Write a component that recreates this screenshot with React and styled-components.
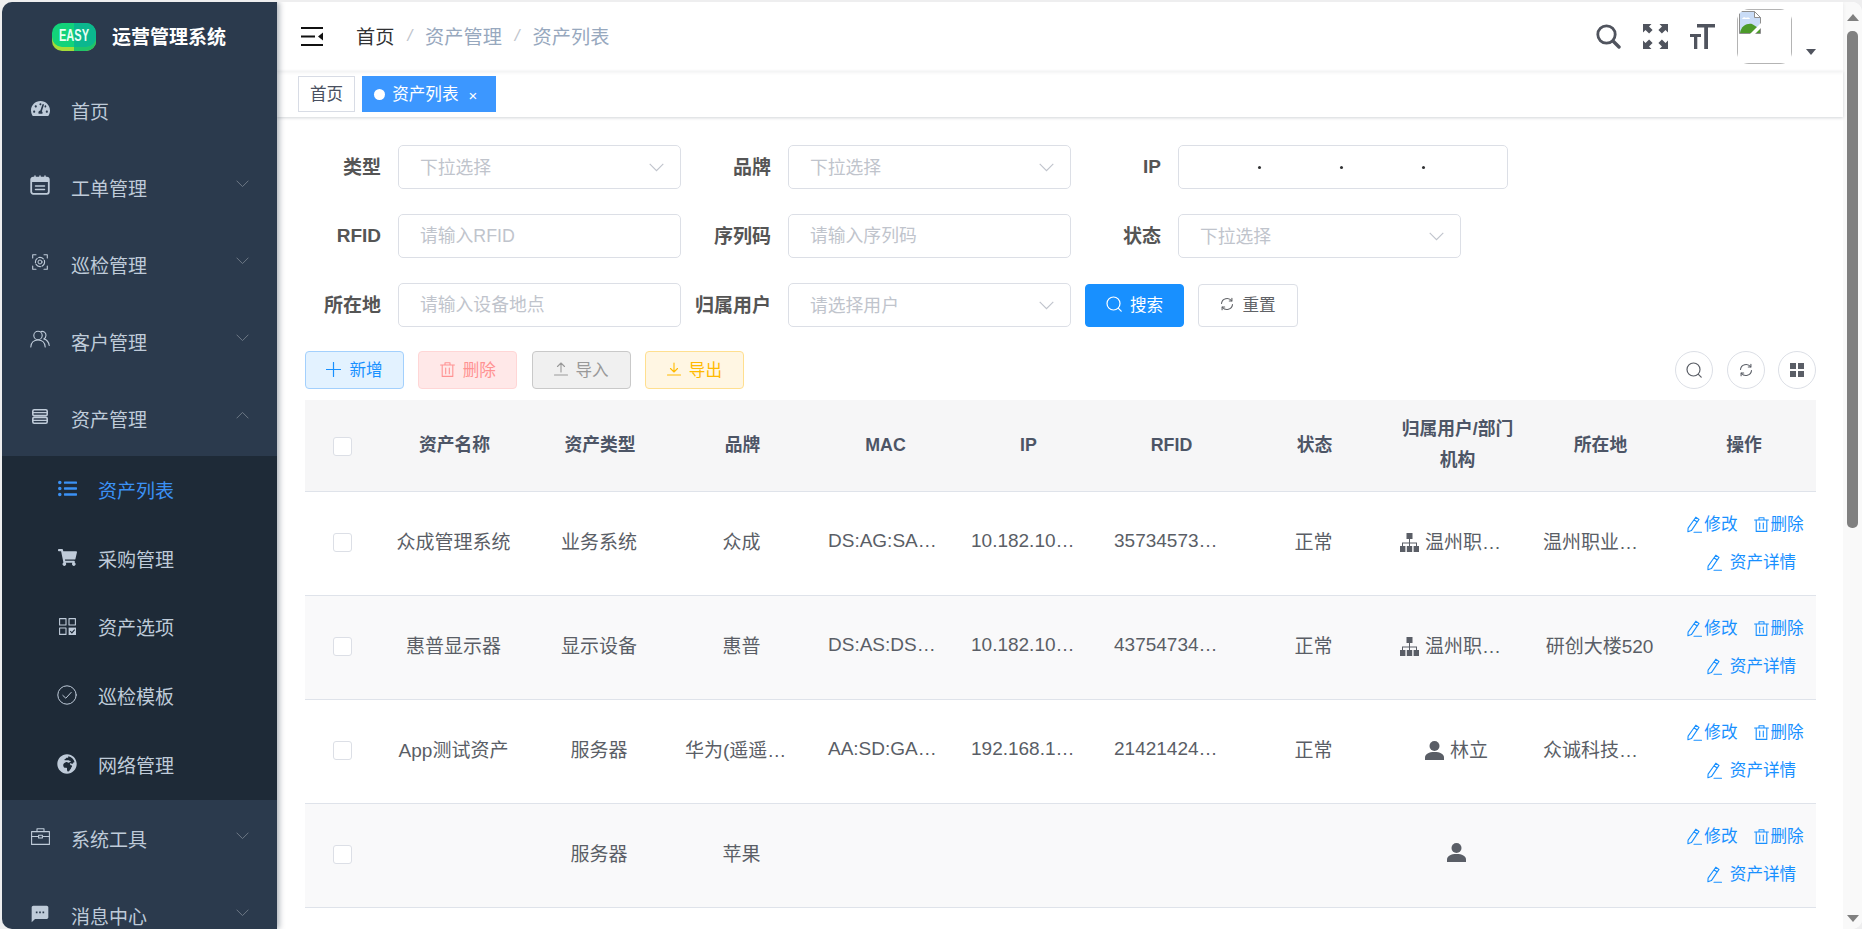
import styled, { createGlobalStyle } from "styled-components";
import { FaTachometerAlt, FaListUl, FaShoppingCart, FaGlobeAfrica } from "react-icons/fa";
import { MdSms } from "react-icons/md";

const GlobalStyle = createGlobalStyle`
    html, body {
        margin: 0;
        height: 100%;
        overflow: hidden;
        background: #eeeeef;
    }
    * {
        box-sizing: border-box;
    }
    body, input, button, table {
        font-family: "Liberation Sans", "Noto Sans CJK SC", sans-serif;
    }
`;

const line = { fill: "none", stroke: "currentColor", strokeLinecap: "round", strokeLinejoin: "round" };

const CalendarIcon = () => (
    <svg width="20" height="20" viewBox="0 0 20 20">
        <rect x="1.2" y="2.6" width="17.6" height="16.2" rx="2" {...line} strokeWidth="1.8" />
        <path d="M1.2 7h17.6V4.5a2 2 0 0 0-2-2H3.2a2 2 0 0 0-2 2z" fill="currentColor" />
        <path d="M5 1v2M10 1v2M15 1v2M5.5 11h9M5.5 14.5h9" {...line} strokeWidth="1.5" />
    </svg>
);

const ScanIcon = () => (
    <svg width="16" height="16" viewBox="0 0 16 16">
        <path d="M.7 4V.7H4M12 .7h3.3V4M15.3 12v3.3H12M4 15.3H.7V12" {...line} strokeWidth="1.1" />
        <circle cx="8" cy="8" r="2" {...line} strokeWidth="1" />
        <circle cx="8" cy="8" r="4.6" {...line} strokeWidth="1.1" strokeDasharray="5 1.6" />
    </svg>
);

const UsersIcon = () => (
    <svg width="20" height="18" viewBox="0 0 20 18">
        <circle cx="8" cy="5.5" r="4.2" {...line} strokeWidth="1.1" />
        <path d="M.8 17c.3-4.4 3-7 7.2-7s6.9 2.6 7.2 7M11 1.6c2.6-.8 5 1 5 3.6 0 1.6-.8 3-2.2 3.7 2.8.8 5 3.4 5.4 6.6" {...line} strokeWidth="1.1" />
    </svg>
);

const ServerIcon = () => (
    <svg width="16" height="15" viewBox="0 0 16 15">
        <rect x=".8" y=".8" width="14.4" height="5.8" rx="1.4" {...line} strokeWidth="1.6" />
        <rect x=".8" y="8.4" width="14.4" height="5.8" rx="1.4" {...line} strokeWidth="1.6" />
        <path d="M3.4 3.7h2.6M3.4 11.3h2.6M.8 3.7h14.4M.8 11.3h14.4" {...line} strokeWidth="1.2" />
    </svg>
);

const OptionsIcon = () => (
    <svg width="17" height="17" viewBox="0 0 17 17">
        <rect x=".6" y=".6" width="6.4" height="6.4" {...line} strokeWidth="1.1" />
        <rect x="10" y=".6" width="6.4" height="6.4" {...line} strokeWidth="1.1" />
        <rect x=".6" y="10" width="6.4" height="6.4" {...line} strokeWidth="1.1" />
        <rect x="9.6" y="9.6" width="7.4" height="7.4" fill="currentColor" />
        <path d="m11.2 13.2 1.7 1.7 2.8-3.2" fill="none" stroke="#1e2a37" strokeWidth="1.1" />
    </svg>
);

const CircleCheckIcon = () => (
    <svg width="20" height="20" viewBox="0 0 20 20">
        <circle cx="10" cy="10" r="9.2" {...line} strokeWidth="1" />
        <path d="m5.8 10.4 3 2.8 5.4-5.8" {...line} strokeWidth="1" />
    </svg>
);

const CaseIcon = () => (
    <svg width="19" height="17" viewBox="0 0 19 17">
        <rect x=".6" y="3.6" width="17.8" height="12.8" {...line} strokeWidth="1.1" />
        <path d="M6 3.6V.8h7v2.8M.6 8.5h6.6M11.8 8.5h6.6" {...line} strokeWidth="1.1" />
        <rect x="7.6" y="7.2" width="3.8" height="2.8" {...line} strokeWidth="1.1" />
    </svg>
);

const EasyLogo = () => (
    <svg width="44" height="28" viewBox="0 0 44 28">
        <rect y="3" width="44" height="25" rx="10" fill="#a5dc38" />
        <path d="M22 3h12a10 10 0 0 1 10 10v5a10 10 0 0 1-10 10H22z" fill="#1fc46a" />
        <rect width="44" height="24" rx="10" fill="#12d37a" />
        <path d="M22 0h12a10 10 0 0 1 10 10v4a10 10 0 0 1-10 10H22z" fill="#0bb78e" />
        <text x="7" y="18" fontSize="16" fontWeight="700" textLength="30" lengthAdjust="spacingAndGlyphs" fill="#e8fff4" fontFamily="Liberation Sans">EASY</text>
    </svg>
);

const HamburgerIcon = () => (
    <svg width="22" height="19" viewBox="0 0 22 19">
        <path d="M0 1h22M0 9.500h14M0 18h22" stroke="#111" strokeWidth="2" fill="none" />
        <path d="M22 5.500v8l-5-4z" fill="#111" />
    </svg>
);

const SearchBigIcon = () => (
    <svg width="25" height="25" viewBox="0 0 25 25">
        <circle cx="10.500" cy="10.500" r="8.700" {...line} strokeWidth="2.800" />
        <path d="m17 17 6 6" {...line} strokeWidth="3.400" />
    </svg>
);

const FullscreenIcon = () => (
    <svg width="25" height="25" viewBox="0 0 25 25" fill="currentColor">
        <path d="M0 0h8.500L6 2.500l3.600 3.600-3.500 3.500L2.500 6 0 8.500z" />
        <path d="M25 0h-8.500L19 2.500l-3.600 3.600 3.500 3.500L22.500 6 25 8.500z" />
        <path d="M0 25h8.500L6 22.500l3.600-3.600-3.500-3.500-3.600 3.600L0 16.500z" />
        <path d="M25 25h-8.500l2.500-2.500-3.600-3.600 3.500-3.500 3.600 3.600 2.500-2.500z" />
    </svg>
);

const FontSizeIcon = () => (
    <svg width="25" height="25" viewBox="0 0 25 25" fill="currentColor">
        <path d="M7 0h18v3.400h-7V25h-3.800V3.400H7z" />
        <path d="M0 10h11v3H7.300v12H4V13H0z" />
    </svg>
);

const BrokenImage = () => (
    <svg width="22" height="23" viewBox="0 0 22 23">
        <path d="M.5 .5h15l6 6v16H.5z" fill="#c9dcf7" stroke="#8f8f8f" />
        <path d="M15.500 .5v6h6z" fill="#fff" stroke="#8f8f8f" />
        <path d="M3 8c1-2 3-2 4-1 2-1 4 0 4 1z" fill="#fff" />
        <path d="M1 22c1-7 7-10 12-9l8 5v4z" fill="#4c9a2a" />
        <path d="M11 23l11-11v5l-6 6z" fill="#fff" />
    </svg>
);

const ChevronIcon = ({ up, size = 13 }) => (
    <svg width={size} height={(size * 8) / 13} viewBox="0 0 13 8">
        <path d={up ? "M.6 7.300 6.500 1.400l5.900 5.900" : "M.6.700l5.900 5.900L12.400.700"} fill="none" stroke="currentColor" strokeWidth="1" />
    </svg>
);

const PlusIcon = () => (
    <svg width="15" height="15" viewBox="0 0 15 15">
        <path d="M7.500.5v14M.5 7.500h14" {...line} strokeWidth="1.200" />
    </svg>
);

const TrashIcon = () => (
    <svg width="15" height="15" viewBox="0 0 15 15">
        <path d="M.6 3h13.800M5 3V.8h5V3M2.200 3v11.400h10.600V3M5.700 6v5.800M9.300 6v5.800" {...line} strokeWidth="1.100" />
    </svg>
);

const UploadIcon = () => (
    <svg width="14" height="14" viewBox="0 0 14 14">
        <path d="M.5 13h13M7 10V1M3.500 4.500 7 1l3.500 3.500" {...line} strokeWidth="1.100" />
    </svg>
);

const DownloadIcon = () => (
    <svg width="14" height="14" viewBox="0 0 14 14">
        <path d="M.5 13h13M7 1v9M3.500 6.500 7 10l3.500-3.500" {...line} strokeWidth="1.100" />
    </svg>
);

const SearchIcon = () => (
    <svg width="16" height="16" viewBox="0 0 16 16">
        <circle cx="7.500" cy="7.500" r="6.500" {...line} strokeWidth="1.200" />
        <path d="m12.400 12.400 2.800 2.800" {...line} strokeWidth="1.200" />
    </svg>
);

const RefreshIcon = () => (
    <svg width="14" height="14" viewBox="0 0 14 14">
        <path d="M1.500 6.500A5.600 5.600 0 0 1 11.600 3.800M12.500 7.500A5.600 5.600 0 0 1 2.400 10.200" {...line} strokeWidth="1.100" />
        <path d="M11.900 1.300v2.700H9.300M2.100 12.700v-2.700h2.600" {...line} strokeWidth="1.100" />
    </svg>
);

const GridIcon = () => (
    <svg width="14" height="14" viewBox="0 0 14 14" fill="currentColor">
        <rect width="6" height="6" />
        <rect x="8" width="6" height="6" />
        <rect y="8" width="6" height="6" />
        <rect x="8" y="8" width="6" height="6" />
    </svg>
);

const PencilIcon = () => (
    <svg width="15" height="17" viewBox="0 0 15 17">
        <path d="M8.800 1.200l3.200 2.200-7.600 11.200-3.500 1.200.2-3.700zM7 3.800l3.200 2.200M7 16.300h7.500" {...line} strokeWidth="1.100" />
    </svg>
);

const UserIcon = () => (
    <svg width="19" height="19" viewBox="0 0 19 19" fill="currentColor">
        <circle cx="9.500" cy="5" r="5" />
        <path d="M0 19v-2.500c0-3.500 4-5.500 9.500-5.500s9.500 2 9.500 5.500V19z" />
    </svg>
);

const OrgIcon = () => (
    <svg width="19" height="19" viewBox="0 0 19 19" fill="currentColor">
        <rect x="6.500" y="0" width="6" height="6" />
        <rect x="0" y="13" width="5.400" height="6" />
        <rect x="6.800" y="13" width="5.400" height="6" />
        <rect x="13.600" y="13" width="5.400" height="6" />
        <path d="M9 6h1v3.500h7v3.500h-1v-2.500h-6V13H9v-2.500H3V13H2V9.500h7z" />
    </svg>
);

const menuTop = [
    { icon: <FaTachometerAlt size={19} />, label: "首页" },
    { icon: <CalendarIcon />, label: "工单管理", arrow: true },
    { icon: <ScanIcon />, label: "巡检管理", arrow: true },
    { icon: <UsersIcon />, label: "客户管理", arrow: true },
    { icon: <ServerIcon />, label: "资产管理", arrow: true, open: true },
];

const menuSub = [
    { icon: <FaListUl size={19} />, label: "资产列表", active: true },
    { icon: <FaShoppingCart size={19} />, label: "采购管理" },
    { icon: <OptionsIcon />, label: "资产选项" },
    { icon: <CircleCheckIcon />, label: "巡检模板" },
    { icon: <FaGlobeAfrica size={20} />, label: "网络管理" },
];

const menuBottom = [
    { icon: <CaseIcon />, label: "系统工具", arrow: true },
    { icon: <MdSms size={22} />, label: "消息中心", arrow: true },
];

const columnWidths = [75, 149, 142, 143, 143, 143, 143, 143, 143, 143, 144];

const columns = ["资产名称", "资产类型", "品牌", "MAC", "IP", "RFID", "状态", "归属用户/部门机构", "所在地", "操作"];

const assets = [
    { name: "众成管理系统", type: "业务系统", brand: "众成", mac: "DS:AG:SA:DG:SA:DG", ip: "10.182.103.12", rfid: "357345734573", status: "正常", dept: "温州职业技术学院", place: "温州职业技术学院" },
    { name: "惠普显示器", type: "显示设备", brand: "惠普", mac: "DS:AS:DSAD:SA:DS", ip: "10.182.104.12", rfid: "437547345734", status: "正常", dept: "温州职业技术学院", place: "研创大楼520" },
    { name: "App测试资产", type: "服务器", brand: "华为(遥遥领先)", mac: "AA:SD:GA:SD:GA:SD", ip: "192.168.100.1", rfid: "214214241421", status: "正常", user: "林立", place: "众诚科技有限公司" },
    { type: "服务器", brand: "苹果", user: "" },
];

export default function App() {
    return (
        <Window>
            <GlobalStyle />
            <SideBar>
                <LogoRow>
                    <EasyLogo />
                    <LogoTitle>运营管理系统</LogoTitle>
                </LogoRow>
                {menuTop.map((item) => (
                    <MenuItem key={item.label}>
                        <MenuIcon>{item.icon}</MenuIcon>
                        <span>{item.label}</span>
                        {item.arrow && <MenuArrow><ChevronIcon up={item.open} /></MenuArrow>}
                    </MenuItem>
                ))}
                <SubMenu>
                    {menuSub.map((item) => (
                        <SubItem key={item.label} active={item.active}>
                            <MenuIcon>{item.icon}</MenuIcon>
                            <span>{item.label}</span>
                        </SubItem>
                    ))}
                </SubMenu>
                {menuBottom.map((item) => (
                    <MenuItem key={item.label}>
                        <MenuIcon>{item.icon}</MenuIcon>
                        <span>{item.label}</span>
                        <MenuArrow><ChevronIcon /></MenuArrow>
                    </MenuItem>
                ))}
            </SideBar>

            <Main>
                <Header>
                    <HamburgerIcon />
                    <Breadcrumb>
                        <CrumbHome>首页</CrumbHome>
                        <CrumbSep>/</CrumbSep>
                        <Crumb>资产管理</Crumb>
                        <CrumbSep>/</CrumbSep>
                        <Crumb>资产列表</Crumb>
                    </Breadcrumb>
                    <HeaderTools>
                        <SearchBigIcon />
                        <FullscreenIcon />
                        <FontSizeIcon />
                        <Avatar>
                            <AvatarFrame><BrokenImage /></AvatarFrame>
                        </Avatar>
                        <AvatarCaret />
                    </HeaderTools>
                </Header>

                <TagsBar>
                    <Tag>首页</Tag>
                    <Tag active>
                        <TagDot />
                        资产列表
                        <TagClose>×</TagClose>
                    </Tag>
                </TagsBar>

                <Content>
                    <FormRow>
                        <FormLabel width={76}>类型</FormLabel>
                        <SelectBox>下拉选择<SelectArrow><ChevronIcon size={15} /></SelectArrow></SelectBox>
                        <FormLabel width={90}>品牌</FormLabel>
                        <SelectBox>下拉选择<SelectArrow><ChevronIcon size={15} /></SelectArrow></SelectBox>
                        <FormLabel width={90} latin>IP</FormLabel>
                        <IpBox>
                            <IpPart><IpDot /></IpPart>
                            <IpPart><IpDot /></IpPart>
                            <IpPart><IpDot /></IpPart>
                            <IpPart />
                        </IpBox>
                    </FormRow>
                    <FormRow>
                        <FormLabel width={76} latin>RFID</FormLabel>
                        <TextInput placeholder="请输入RFID" />
                        <FormLabel width={90}>序列码</FormLabel>
                        <TextInput placeholder="请输入序列码" />
                        <FormLabel width={90}>状态</FormLabel>
                        <SelectBox>下拉选择<SelectArrow><ChevronIcon size={15} /></SelectArrow></SelectBox>
                    </FormRow>
                    <FormRow>
                        <FormLabel width={76}>所在地</FormLabel>
                        <TextInput placeholder="请输入设备地点" />
                        <FormLabel width={90}>归属用户</FormLabel>
                        <SelectBox>请选择用户<SelectArrow><ChevronIcon size={15} /></SelectArrow></SelectBox>
                        <SearchButton><SearchIcon />搜索</SearchButton>
                        <ResetButton><RefreshIcon />重置</ResetButton>
                    </FormRow>

                    <Toolbar>
                        <ActionButton kind="add"><PlusIcon />新增</ActionButton>
                        <ActionButton kind="del"><TrashIcon />删除</ActionButton>
                        <ActionButton kind="imp"><UploadIcon />导入</ActionButton>
                        <ActionButton kind="exp"><DownloadIcon />导出</ActionButton>
                        <RoundTools>
                            <RoundButton><SearchIcon /></RoundButton>
                            <RoundButton><RefreshIcon /></RoundButton>
                            <RoundButton><GridIcon /></RoundButton>
                        </RoundTools>
                    </Toolbar>

                    <Table>
                        <colgroup>
                            {columnWidths.map((w, i) => <col key={i} width={w} />)}
                        </colgroup>
                        <thead>
                            <tr>
                                <HeadCell><CheckBox /></HeadCell>
                                {columns.map((c) => (
                                    <HeadCell key={c}><CellText>{c}</CellText></HeadCell>
                                ))}
                            </tr>
                        </thead>
                        <tbody>
                            {assets.map((row, i) => (
                                <BodyRow key={i} striped={i % 2 === 1}>
                                    <CheckCell><CheckBox /></CheckCell>
                                    <BodyCell><CellText>{row.name}</CellText></BodyCell>
                                    <BodyCell><CellText>{row.type}</CellText></BodyCell>
                                    <BodyCell><CellText>{row.brand}</CellText></BodyCell>
                                    <BodyCell><CellText>{row.mac}</CellText></BodyCell>
                                    <BodyCell><CellText>{row.ip}</CellText></BodyCell>
                                    <BodyCell><CellText>{row.rfid}</CellText></BodyCell>
                                    <BodyCell><CellText>{row.status}</CellText></BodyCell>
                                    <BodyCell>
                                        <CellText>
                                            {row.dept && <><OrgIcon /><OwnerName>{row.dept}</OwnerName></>}
                                            {row.user !== undefined && <UserIcon />}
                                            {row.user && <OwnerName>{row.user}</OwnerName>}
                                        </CellText>
                                    </BodyCell>
                                    <BodyCell><CellText>{row.place}</CellText></BodyCell>
                                    <ActionCell>
                                        <RowActions>
                                            <RowAction><PencilIcon />修改</RowAction>
                                            <RowAction><TrashIcon />删除</RowAction>
                                            <RowDetail><PencilIcon />资产详情</RowDetail>
                                        </RowActions>
                                    </ActionCell>
                                </BodyRow>
                            ))}
                        </tbody>
                    </Table>
                </Content>
            </Main>

            <ScrollRail>
                <RailArrowUp />
                <RailThumb />
                <RailArrowDown />
            </ScrollRail>
        </Window>
    );
}

const Window = styled.div`
    display: flex;
    height: calc(100vh - 2px);
    margin: 2px 0 0 2px;
    background: #fff;
    border-radius: 10px;
    overflow: hidden;
`;

const SideBar = styled.aside`
    flex: 0 0 275px;
    background: #2b3a4d;
    color: #bfcbd9;
    font-size: 19px;
    box-shadow: 2px 0 6px rgba(0, 21, 41, 0.35);
    position: relative;
    z-index: 2;
`;

const LogoRow = styled.div`
    height: 69px;
    display: flex;
    align-items: center;
    padding: 0 0 0 50px;
    gap: 16px;
`;

const LogoTitle = styled.span`
    color: #fff;
    font-weight: 700;
    font-size: 19px;
    margin-top: -2px;
`;

const MenuItem = styled.div`
    position: relative;
    height: 77px;
    display: flex;
    align-items: center;
    padding: 1px 0 0 28px;
    gap: 21px;
`;

const MenuIcon = styled.span`
    width: 20px;
    height: 22px;
    margin-top: -4px;
    display: flex;
    align-items: center;
    justify-content: center;
    flex: none;
`;

const MenuArrow = styled.span`
    position: absolute;
    right: 28px;
    top: 32px;
    color: #6d7885;
    line-height: 0;
`;

const SubMenu = styled.div`
    background: #1e2a37;
`;

const SubItem = styled.div`
    height: 68.8px;
    display: flex;
    align-items: center;
    padding: 0 0 2px 55px;
    gap: 21px;
    color: ${(props) => (props.active ? "#3b91f5" : "#bfcbd9")};
    ${MenuIcon} {
        margin-top: -1px;
    }
`;

const Main = styled.main`
    flex: 1;
    min-width: 0;
    display: flex;
    flex-direction: column;
    background: #fff;
`;

const Header = styled.header`
    height: 69px;
    flex: none;
    display: flex;
    align-items: center;
    padding-left: 24px;
    box-shadow: 0 1px 4px rgba(0, 21, 41, 0.08);
    position: relative;
    z-index: 1;
`;

const Breadcrumb = styled.nav`
    display: flex;
    align-items: center;
    margin: -2px 0 0 33px;
    font-size: 19.2px;
`;

const CrumbHome = styled.span`
    color: #303133;
`;

const Crumb = styled.span`
    color: #97a8be;
`;

const CrumbSep = styled.span`
    color: #c0c4cc;
    font-size: 17px;
    font-style: italic;
    margin: 0 13px 0 13px;
`;

const HeaderTools = styled.div`
    margin-left: auto;
    display: flex;
    align-items: center;
    gap: 22px;
    color: #50545e;
    padding-right: 27px;
`;

const Avatar = styled.div`
    width: 55px;
    height: 55px;
    border-radius: 12px;
    overflow: hidden;
`;

const AvatarFrame = styled.div`
    width: 100%;
    height: 100%;
    border: 1px solid #b4b4b4;
    padding: 1px;
    line-height: 0;
`;

const AvatarCaret = styled.span`
    width: 0;
    height: 0;
    margin: 30px 0 0 -8px;
    border-left: 5px solid transparent;
    border-right: 5px solid transparent;
    border-top: 6px solid #50545e;
`;

const TagsBar = styled.div`
    height: 46px;
    flex: none;
    display: flex;
    gap: 7px;
    padding: 5px 0 0 21px;
    box-shadow: 0 1px 3px rgba(0, 21, 41, 0.18);
    position: relative;
`;

const Tag = styled.span`
    height: 36px;
    display: inline-flex;
    align-items: center;
    padding: ${(props) => (props.active ? "0 18px 2px 11px" : "0 11px 2px")};
    font-size: 16.6px;
    color: ${(props) => (props.active ? "#fff" : "#495060")};
    background: ${(props) => (props.active ? "#3c97ff" : "#fff")};
    border: 1px solid ${(props) => (props.active ? "#3c97ff" : "#d8dce5")};
`;

const TagDot = styled.span`
    width: 11px;
    height: 11px;
    border-radius: 50%;
    background: #fff;
    margin: 2px 7px 0 0;
`;

const TagClose = styled.span`
    font-size: 15px;
    margin: 4px 0 0 10px;
`;

const Content = styled.div`
    flex: 1;
    min-height: 0;
    padding: 28px 27px 0 28px;
    overflow: hidden;
`;

const FormRow = styled.div`
    display: flex;
    align-items: center;
    height: 44px;
    margin-bottom: 25px;
`;

const FormLabel = styled.label`
    width: ${(props) => props.width}px;
    flex: none;
    margin-right: 17px;
    padding-bottom: ${(props) => (props.latin ? "0" : "4px")};
    text-align: right;
    font-size: 19px;
    font-weight: 700;
    color: #555;
    white-space: nowrap;
`;

const SelectBox = styled.div`
    position: relative;
    width: 283px;
    height: 44px;
    flex: none;
    display: flex;
    align-items: center;
    padding: 0 0 2px 21px;
    font-size: 17.8px;
    color: #c0c4cc;
    background: #fff;
    border: 1px solid #dcdfe6;
    border-radius: 5px;
`;

const SelectArrow = styled.span`
    position: absolute;
    right: 16px;
    top: 17px;
    line-height: 0;
    color: #c0c4cc;
`;

const TextInput = styled.input`
    width: 283px;
    height: 44px;
    flex: none;
    padding: 0 21px;
    font-size: 17.8px;
    color: #606266;
    outline: none;
    background: #fff;
    border: 1px solid #dcdfe6;
    border-radius: 5px;
    &::placeholder {
        color: #c0c4cc;
        opacity: 1;
    }
`;

const IpBox = styled.div`
    width: 330px;
    height: 44px;
    flex: none;
    display: flex;
    border: 1px solid #dcdfe6;
    border-radius: 5px;
`;

const IpPart = styled.span`
    flex: 1;
    display: flex;
    align-items: center;
    justify-content: flex-end;
`;

const IpDot = styled.span`
    width: 3px;
    height: 3px;
    border-radius: 50%;
    background: #303133;
`;

const SearchButton = styled.button`
    width: 99px;
    height: 43px;
    margin-left: 14px;
    display: flex;
    align-items: center;
    justify-content: center;
    gap: 8px;
    padding: 0 0 2px;
    color: #fff;
    font-size: 16.6px;
    background: #1890ff;
    border: 1px solid #1890ff;
    border-radius: 4px;
`;

const ResetButton = styled(SearchButton)`
    width: 100px;
    color: #606266;
    background: #fff;
    border-color: #dcdfe6;
`;

const Toolbar = styled.div`
    display: flex;
    align-items: center;
    gap: 14.3px;
    height: 38px;
    margin: -1px 0 11px;
`;

const kinds = {
    add: { bg: "#e3f2ff", border: "#a3d0fd", color: "#1890ff" },
    del: { bg: "#ffe8e8", border: "#ffd6d6", color: "#ff9292" },
    imp: { bg: "#f0f0f0", border: "#c9c9c9", color: "#999" },
    exp: { bg: "#fff6e3", border: "#ffdf8f", color: "#ffba00" },
};

const ActionButton = styled.button`
    width: 99px;
    height: 38px;
    display: flex;
    align-items: center;
    justify-content: center;
    gap: 8px;
    padding: 0 0 2px;
    font-size: 16.6px;
    color: ${(props) => kinds[props.kind].color};
    background: ${(props) => kinds[props.kind].bg};
    border: 1px solid ${(props) => kinds[props.kind].border};
    border-radius: 4px;
`;

const RoundTools = styled.div`
    margin-left: auto;
    display: flex;
    gap: 13.500px;
`;

const RoundButton = styled.button`
    width: 38px;
    height: 38px;
    padding: 0;
    display: flex;
    align-items: center;
    justify-content: center;
    color: #5a5e66;
    background: #fff;
    border: 1px solid #dcdfe6;
    border-radius: 50%;
`;

const Table = styled.table`
    width: 1511px;
    table-layout: fixed;
    border-collapse: collapse;
`;

const HeadCell = styled.th`
    height: 91px;
    padding: 0;
    background: #f6f6f7;
    border-bottom: 1px solid #dfe3ea;
    text-align: center;
    font-size: 17.8px;
    line-height: 31px;
    font-weight: 700;
    color: #4d5566;
    div {
        white-space: normal;
        padding: 0 10px;
    }
`;

const BodyRow = styled.tr`
    background: ${(props) => (props.striped ? "#f9f9fa" : "#fff")};
`;

const BodyCell = styled.td`
    height: 104px;
    padding: 0 0 5px;
    text-align: center;
    font-size: 19px;
    color: #5a5e66;
    border-bottom: 1px solid #dfe3ea;
`;

const CheckCell = styled(BodyCell)`
    padding-bottom: 2px;
`;

const ActionCell = styled(BodyCell)`
    padding: 1px 0 0;
`;

const CheckBox = styled.span`
    display: inline-block;
    width: 19px;
    height: 19px;
    vertical-align: middle;
    background: #fff;
    border: 1px solid #dcdfe6;
    border-radius: 3px;
`;

const CellText = styled.div`
    padding: 0 16px 0 14px;
    overflow: hidden;
    white-space: nowrap;
    text-overflow: ellipsis;
    svg {
        vertical-align: -3px;
    }
`;

const OwnerName = styled.span`
    margin-left: 6px;
`;

const RowActions = styled.div`
    display: flex;
    flex-wrap: wrap;
    justify-content: center;
    padding-left: 3px;
    row-gap: 16px;
    column-gap: 16px;
`;

const RowAction = styled.span`
    display: inline-flex;
    align-items: center;
    font-size: 16.6px;
    line-height: 22px;
    color: #1890ff;
    svg {
        margin-right: 2px;
    }
`;

const RowDetail = styled(RowAction)`
    margin-left: 12px;
    svg {
        margin-right: 8px;
    }
`;

const ScrollRail = styled.div`
    flex: 0 0 19px;
    display: flex;
    flex-direction: column;
    align-items: center;
    background: #f9f9f9;
    padding: 12px 0 7px;
`;

const RailArrowUp = styled.span`
    width: 0;
    height: 0;
    border-left: 6px solid transparent;
    border-right: 6px solid transparent;
    border-bottom: 7px solid #808080;
`;

const RailArrowDown = styled.span`
    width: 0;
    height: 0;
    margin-top: auto;
    border-left: 6px solid transparent;
    border-right: 6px solid transparent;
    border-top: 7px solid #808080;
`;

const RailThumb = styled.span`
    width: 11px;
    height: 497px;
    margin-top: 10px;
    background: #808080;
    border-radius: 5px;
`;
